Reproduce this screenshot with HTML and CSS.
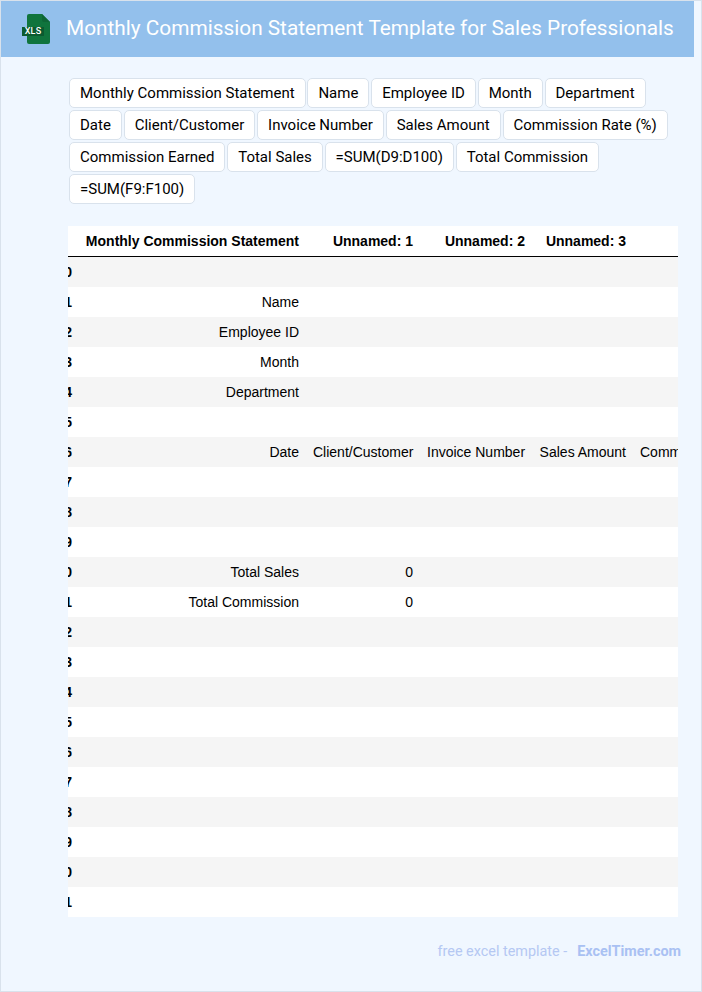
FILE: index.html
```html
<!DOCTYPE html>
<html lang="en">
<head>
<meta charset="utf-8">
<title>Monthly Commission Statement Template for Sales Professionals</title>
<link rel="stylesheet" href="styles.css">
</head>
<body>
<div class="page">
  <header class="banner">
    <svg class="file-icon" width="32" height="32" viewBox="0 0 32 32" aria-hidden="true">
      <path d="M8 1 Q6 1 6 3 V29 Q6 31 8 31 H27 Q29 31 29 29 V9 L21 1 Z" fill="#10743d"/>
      <path d="M21 1 L29 9 H23 Q21 9 21 7 Z" fill="#0e6636"/>
      <rect x="1" y="14" width="22" height="9" fill="#0b5a30"/>
      <text x="12" y="21.2" class="file-label" text-anchor="middle">XLS</text>
    </svg>
    <h1 class="title">Monthly Commission Statement Template for Sales Professionals</h1>
  </header>
  <main class="content">
    <div class="tags">
      <span class="tag">Monthly Commission Statement</span>
      <span class="tag">Name</span>
      <span class="tag">Employee ID</span>
      <span class="tag">Month</span>
      <span class="tag">Department</span>
      <span class="tag">Date</span>
      <span class="tag">Client/Customer</span>
      <span class="tag">Invoice Number</span>
      <span class="tag">Sales Amount</span>
      <span class="tag">Commission Rate (%)</span>
      <span class="tag">Commission Earned</span>
      <span class="tag">Total Sales</span>
      <span class="tag">=SUM(D9:D100)</span>
      <span class="tag">Total Commission</span>
      <span class="tag">=SUM(F9:F100)</span>
    </div>
    <div class="table-clip">
      <table class="sheet">
        <thead>
          <tr><th class="idx"></th><th class="c1">Monthly Commission Statement</th><th class="c2">Unnamed: 1</th><th class="c3">Unnamed: 2</th><th class="c4">Unnamed: 3</th><th class="c5"></th></tr>
        </thead>
        <tbody>
          <tr><th class="idx">0</th><td></td><td></td><td></td><td></td><td></td></tr>
          <tr><th class="idx">1</th><td>Name</td><td></td><td></td><td></td><td></td></tr>
          <tr><th class="idx">2</th><td>Employee ID</td><td></td><td></td><td></td><td></td></tr>
          <tr><th class="idx">3</th><td>Month</td><td></td><td></td><td></td><td></td></tr>
          <tr><th class="idx">4</th><td>Department</td><td></td><td></td><td></td><td></td></tr>
          <tr><th class="idx">5</th><td></td><td></td><td></td><td></td><td></td></tr>
          <tr><th class="idx">6</th><td>Date</td><td>Client/Customer</td><td>Invoice Number</td><td>Sales Amount</td><td>Commission Rate (%)</td></tr>
          <tr><th class="idx">7</th><td></td><td></td><td></td><td></td><td></td></tr>
          <tr><th class="idx">8</th><td></td><td></td><td></td><td></td><td></td></tr>
          <tr><th class="idx">9</th><td></td><td></td><td></td><td></td><td></td></tr>
          <tr><th class="idx">10</th><td>Total Sales</td><td>0</td><td></td><td></td><td></td></tr>
          <tr><th class="idx">11</th><td>Total Commission</td><td>0</td><td></td><td></td><td></td></tr>
          <tr><th class="idx">12</th><td></td><td></td><td></td><td></td><td></td></tr>
          <tr><th class="idx">13</th><td></td><td></td><td></td><td></td><td></td></tr>
          <tr><th class="idx">14</th><td></td><td></td><td></td><td></td><td></td></tr>
          <tr><th class="idx">15</th><td></td><td></td><td></td><td></td><td></td></tr>
          <tr><th class="idx">16</th><td></td><td></td><td></td><td></td><td></td></tr>
          <tr><th class="idx">17</th><td></td><td></td><td></td><td></td><td></td></tr>
          <tr><th class="idx">18</th><td></td><td></td><td></td><td></td><td></td></tr>
          <tr><th class="idx">19</th><td></td><td></td><td></td><td></td><td></td></tr>
          <tr><th class="idx">20</th><td></td><td></td><td></td><td></td><td></td></tr>
          <tr><th class="idx">21</th><td></td><td></td><td></td><td></td><td></td></tr>
        </tbody>
      </table>
    </div>
    <footer class="credit">
      <span class="credit-text">free excel template -</span>
      <a class="credit-link">ExcelTimer.com</a>
    </footer>
  </main>
</div>
</body>
</html>
```
FILE: styles.css
```css
* { box-sizing: border-box; }
html, body { margin: 0; padding: 0; }
body { background: #f0f7ff; }
.page {
  width: 702px;
  height: 992px;
  background: #f0f7ff;
  border: 1px solid #d9e2ec;
  padding-right: 7px;
  font-family: Roboto, sans-serif;
  overflow: hidden;
}
.banner {
  display: flex;
  align-items: center;
  height: 56px;
  background: #93c0ec;
  padding-left: 20px;
  padding-bottom: 2px;
  gap: 13px;
}
.file-icon { flex: none; display: block; margin-top: 2px; }
.file-label { font: 500 9px Roboto, sans-serif; letter-spacing: 0.2px; fill: #fff; }
.title {
  margin: 0;
  color: #fff;
  font: 400 20.8px/1.2 Roboto, sans-serif;
  white-space: nowrap;
}
.content { padding: 21px 16px 0 67px; }
.tags { display: flex; flex-wrap: wrap; gap: 2px 1.75px; width: 610px; margin-left: 1px; }
.tag {
  display: block;
  height: 30px;
  padding: 0 10px;
  background: #fff;
  border: 1px solid #d9e2ec;
  border-radius: 5px;
  color: #000;
  font: 400 15px/28px Roboto, sans-serif;
  white-space: nowrap;
}
.table-clip {
  margin-top: 22px;
  width: 610px;
  overflow: hidden;
}
.sheet {
  margin-left: -20px;
  border-collapse: separate;
  border-spacing: 0;
  table-layout: fixed;
  width: 735px;
  font: 14px "Liberation Sans", sans-serif;
  color: #000;
}
.sheet th, .sheet td {
  height: 30px;
  padding: 0 7px;
  text-align: right;
  white-space: nowrap;
  overflow: hidden;
}
.sheet th { font-weight: bold; }
.sheet .idx { width: 30px; padding-right: 6px; }
.sheet thead th { height: 31px; border-bottom: 1px solid #000; }
.sheet tbody tr:nth-child(odd) { background: #f5f5f5; }
.sheet tbody tr:nth-child(even) { background: #fff; }
.sheet thead tr { background: #fff; }
.c1 { width: 228px; }
.c2 { width: 114px; }
.c3 { width: 112px; }
.c4 { width: 101px; }
.c5 { width: 150px; }
.sheet td:last-child { text-align: left; }
.credit {
  margin-top: 25px;
  display: flex;
  justify-content: flex-end;
  gap: 10px;
  font-size: 14.4px;
  line-height: 20px;
  color: #b5c8f3;
  width: 613px;
}
.credit-link { font-weight: 700; color: #a9c1f3; }
```
